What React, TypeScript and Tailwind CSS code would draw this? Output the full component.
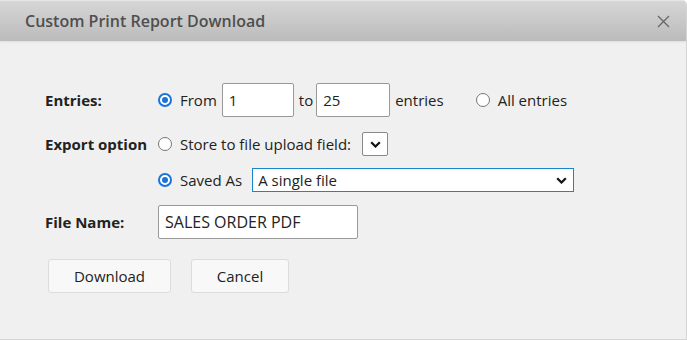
import React from 'react';

function Radio({ checked }: { checked?: boolean }) {
  return checked ? (
    <span className="flex w-[14px] h-[14px] rounded-full border-2 border-[#1a73d9] bg-white items-center justify-center shrink-0">
      <span className="block w-[6px] h-[6px] rounded-full bg-[#1a73d9]" />
    </span>
  ) : (
    <span className="block w-[14px] h-[14px] rounded-full border border-[#767676] bg-white shrink-0" />
  );
}

function Chevron() {
  return (
    <svg width="11" height="7" viewBox="0 0 11 7" className="shrink-0">
      <polyline points="1.2,1.2 5.5,5.5 9.8,1.2" fill="none" stroke="#111" strokeWidth="2.2" />
    </svg>
  );
}

export default function App() {
  return (
    <div
      className="w-[687px] h-[340px] bg-[#f0f0f0] border-r border-b border-[#d4d4d4] rounded-tr-[5px] overflow-hidden text-[#222]"
      style={{ fontFamily: '"Open Sans", "Liberation Sans", sans-serif' }}
    >
      {/* Header */}
      <div className="h-[41px] border-t border-[#e6e6e6] bg-gradient-to-b from-[#d6d6d6] to-[#bbbbbb] flex items-center justify-between pl-[25px] pr-[16px] shadow-[0_1px_2px_rgba(0,0,0,0.08)]">
        <h1 className="text-[16px] font-semibold text-[#4f4f4f] leading-none">Custom Print Report Download</h1>
        <svg width="13" height="13" viewBox="0 0 13 13">
          <path d="M1 1 L12 12 M12 1 L1 12" stroke="#666" strokeWidth="1.3" fill="none" />
        </svg>
      </div>

      <div className="pl-[45px] text-[15px]">
        {/* Entries */}
        <div className="mt-[42px] h-[34px] flex items-center">
          <div className="w-[113px] text-[15px] font-bold">Entries:</div>
          <Radio checked />
          <span className="ml-[8px]">From</span>
          <div className="ml-[5px] w-[72px] h-[34px] bg-white border border-[#999] rounded-[2px] flex items-center pl-[6px]">1</div>
          <span className="ml-[5px]">to</span>
          <div className="ml-[3px] w-[74px] h-[34px] bg-white border border-[#999] rounded-[2px] flex items-center pl-[6px]">25</div>
          <span className="ml-[5px]">entries</span>
          <div className="ml-[32px]"><Radio /></div>
          <span className="ml-[8px]">All entries</span>
        </div>

        {/* Export option */}
        <div className="mt-[14px] h-[26px] flex items-center">
          <div className="w-[113px] text-[15px] font-bold">Export option</div>
          <Radio />
          <span className="ml-[8px]">Store to file upload field:</span>
          <div className="ml-[11px] w-[26px] h-[24px] bg-white border border-[#888] rounded-[2px] flex items-center justify-center">
            <Chevron />
          </div>
        </div>

        {/* Saved As */}
        <div className="mt-[10px] h-[26px] flex items-center">
          <div className="w-[113px]" />
          <Radio checked />
          <span className="ml-[8px]">Saved As</span>
          <div className="ml-[10px] w-[322px] h-[24px] bg-white border border-[#1a85c8] flex items-center justify-between pl-[5px] pr-[6px]">
            <span>A single file</span>
            <Chevron />
          </div>
        </div>

        {/* File Name */}
        <div className="mt-[12px] h-[34px] flex items-center">
          <div className="w-[113px] text-[15px] font-bold">File Name:</div>
          <div className="w-[200px] h-[34px] bg-white border border-[#999] rounded-[2px] flex items-center pl-[6px] text-[16px]">SALES ORDER PDF</div>
        </div>

        {/* Buttons */}
        <div className="mt-[20px] flex gap-[20px] pl-[3px]">
          <button className="w-[123px] h-[34px] bg-[#f8f8f8] border border-[#dcdcdc] rounded-[3px] text-[15px] text-[#222]">Download</button>
          <button className="w-[98px] h-[34px] bg-[#f8f8f8] border border-[#dcdcdc] rounded-[3px] text-[15px] text-[#222]">Cancel</button>
        </div>
      </div>
    </div>
  );
}
